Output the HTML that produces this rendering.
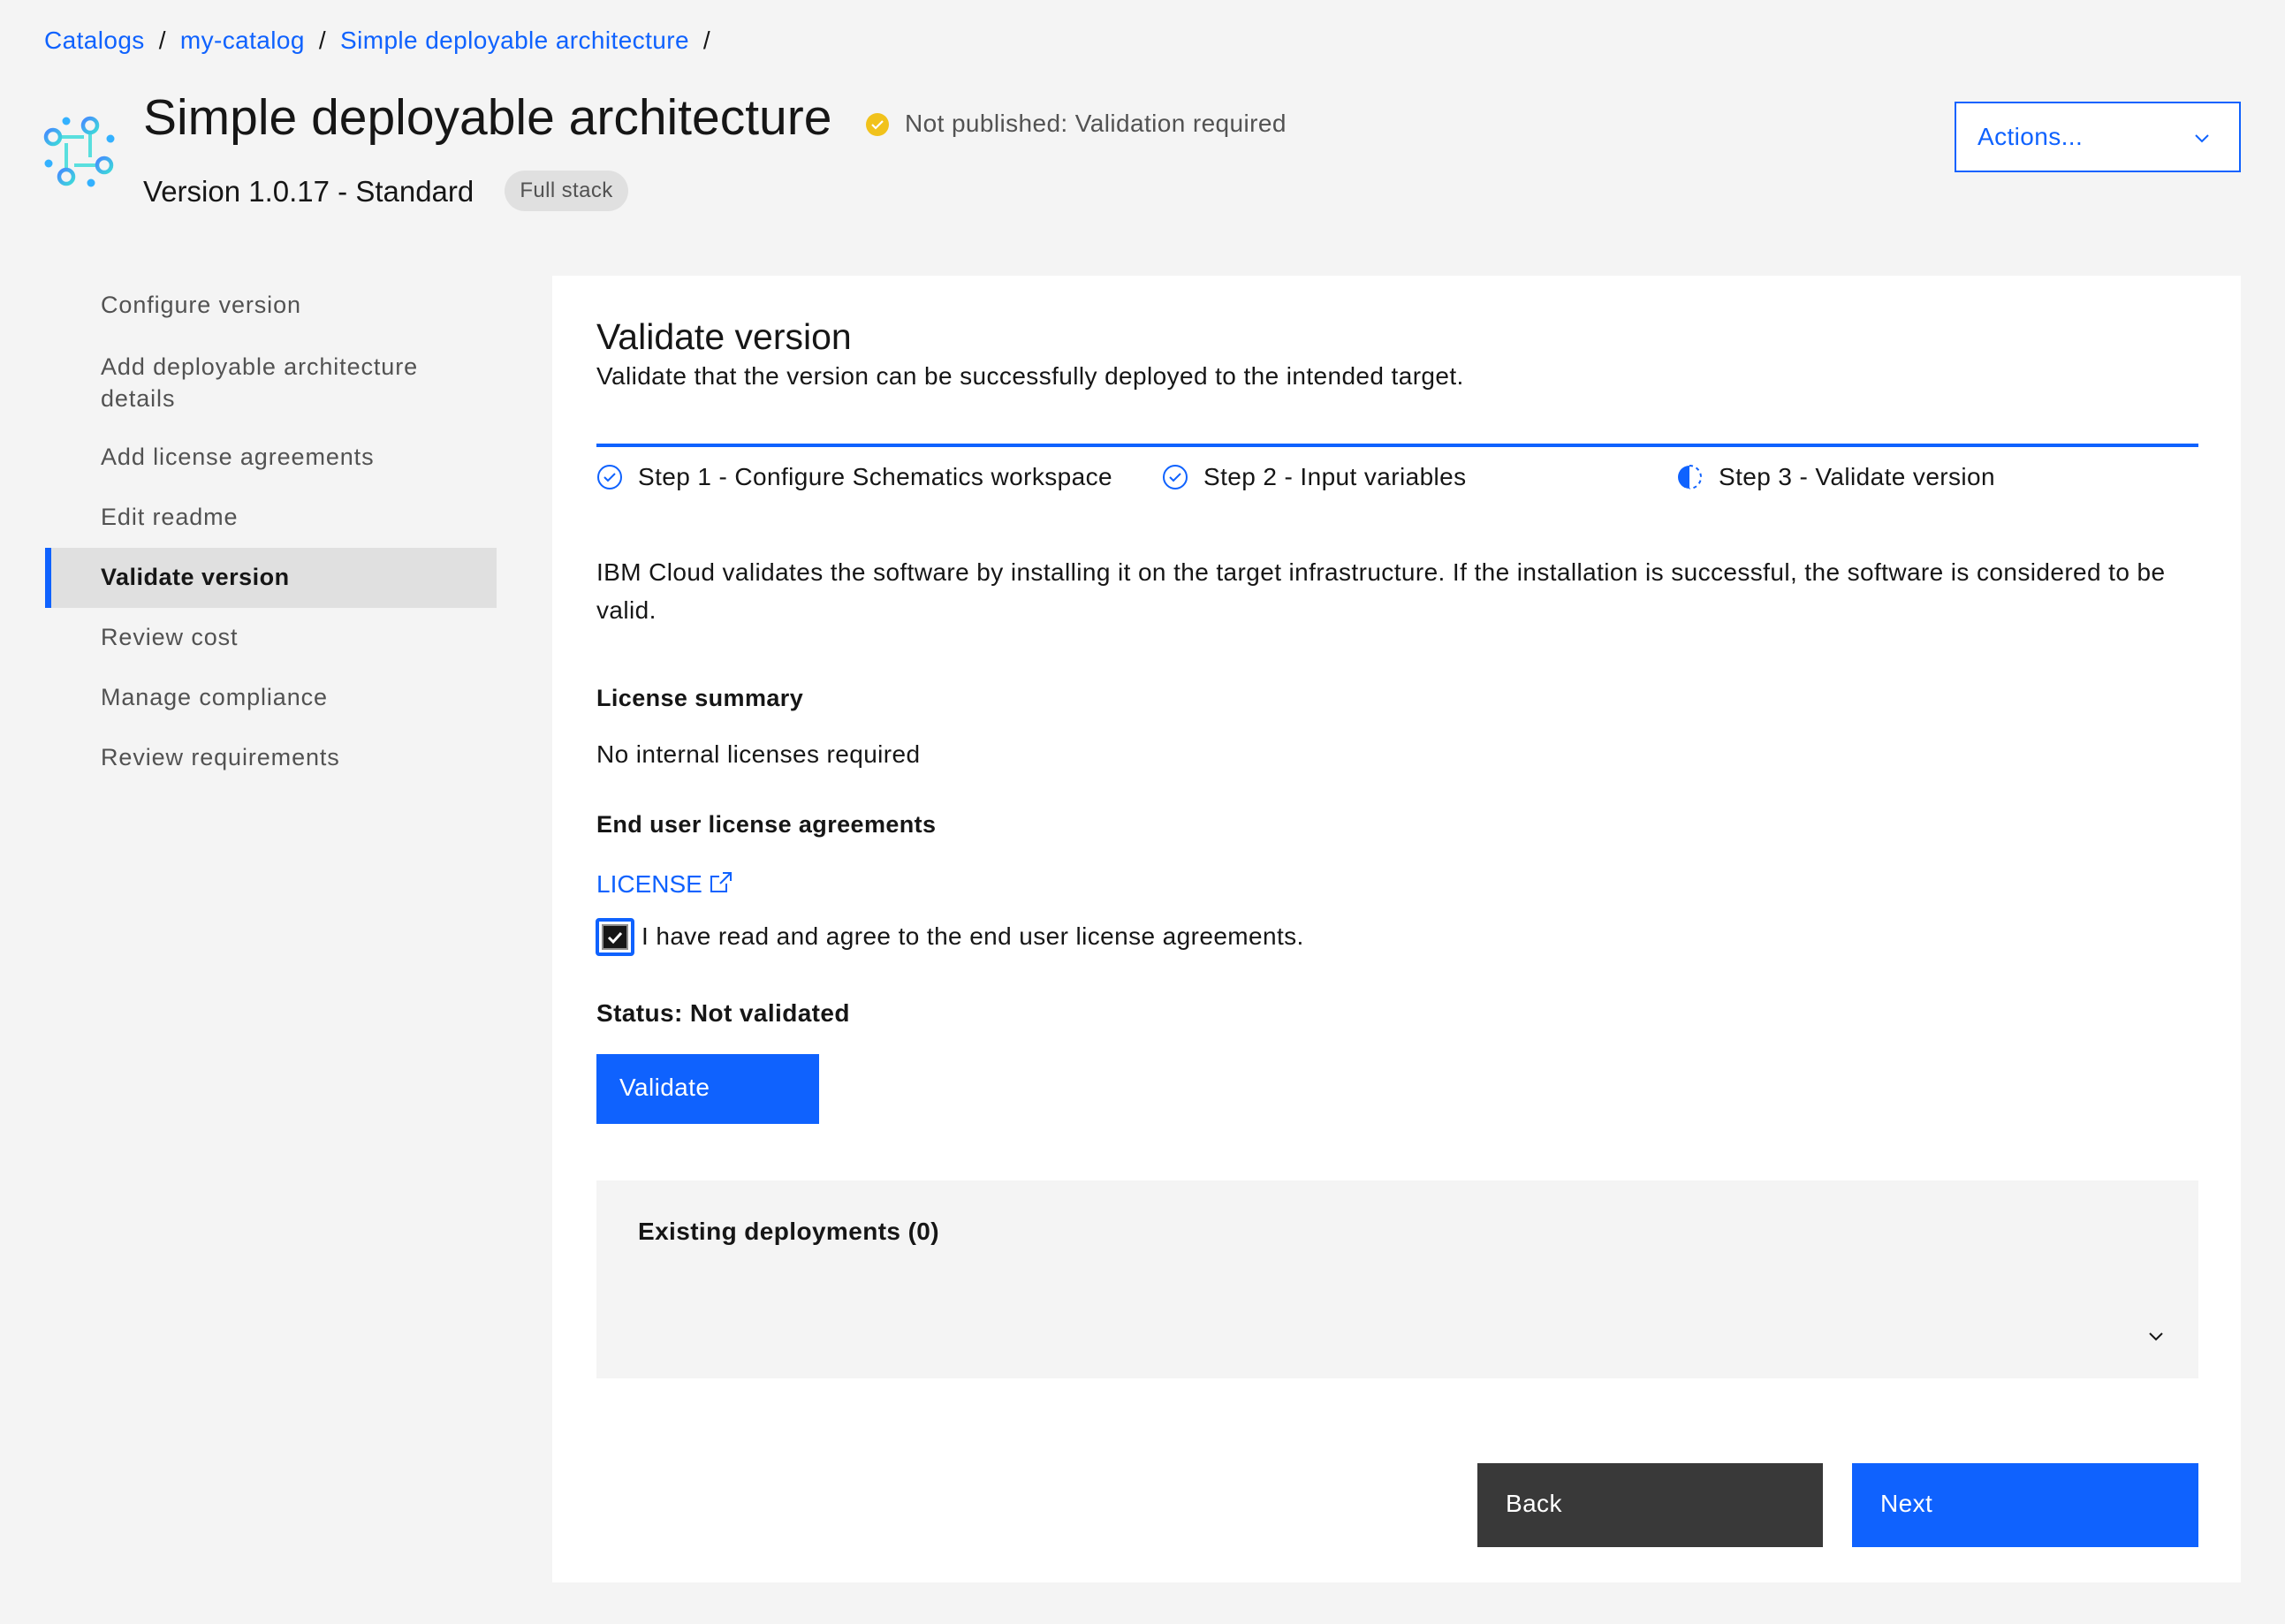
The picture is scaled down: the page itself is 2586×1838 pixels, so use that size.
<!DOCTYPE html>
<html><head><meta charset="utf-8">
<style>
*{box-sizing:border-box;margin:0;padding:0}
body{width:2586px;height:1838px;background:#f4f4f4;font-family:"Liberation Sans",sans-serif;color:#161616;position:relative;overflow:hidden;letter-spacing:0.4px}
.a{position:absolute;white-space:nowrap}
.bc{top:30px;left:50px;font-size:28px;color:#0f62fe}
.bc span{color:#161616;margin:0 16px}
.nav{left:114px;font-size:27px;color:#525252;letter-spacing:0.9px}
.card{position:absolute;left:625px;top:312px;width:1911px;height:1479px;background:#fff}
.b{font-weight:bold}
</style></head><body>
<div class="a bc">Catalogs<span>/</span>my-catalog<span>/</span>Simple deployable architecture<span>/</span></div>
<svg class="a" style="left:40px;top:120px" width="100" height="100" viewBox="40 120 100 100">
<defs><linearGradient id="g" x1="0" y1="0" x2="1" y2="1"><stop offset="0" stop-color="#4589ff"/><stop offset="1" stop-color="#3ddbd9"/></linearGradient></defs>
<g stroke="#3ddbd9" stroke-width="4" fill="none" opacity=".85">
<path d="M69 155H95M102 151V178M109 187H84M75 191V162"/></g>
<g stroke="url(#g)" stroke-width="4.5" fill="none">
<circle cx="60" cy="155" r="8"/><circle cx="102" cy="142" r="8"/><circle cx="118" cy="187" r="8"/><circle cx="75" cy="200" r="8"/></g>
<g fill="#33b1ff"><circle cx="75" cy="137" r="4.5"/><circle cx="125" cy="157" r="4.5"/><circle cx="55" cy="185" r="4.5"/><circle cx="103" cy="207" r="4.5"/></g>
</svg>
<div class="a" style="left:162px;top:100px;font-size:57px;letter-spacing:0">Simple deployable architecture</div>
<svg class="a" style="left:979px;top:127px" width="28" height="28" viewBox="0 0 28 28"><circle cx="14" cy="14" r="13" fill="#f1c21b"/><path d="M8 14l4 4 8-8" stroke="#fff" stroke-width="2.2" fill="none"/></svg>
<div class="a" style="left:1024px;top:124px;font-size:28px;color:#525252">Not published: Validation required</div>
<div class="a" style="left:162px;top:198px;font-size:33px;letter-spacing:0">Version 1.0.17 - Standard</div>
<div class="a" style="left:571px;top:193px;width:140px;height:46px;border-radius:23px;background:#e0e0e0;font-size:24px;color:#525252;text-align:center;line-height:46px">Full stack</div>
<div class="a" style="left:2212px;top:115px;width:324px;height:80px;border:2px solid #0f62fe;background:#fff"></div>
<div class="a" style="left:2238px;top:139px;font-size:28px;color:#0f62fe">Actions...</div>
<svg class="a" style="left:2482px;top:146px" width="20" height="20" viewBox="0 0 20 20"><path d="M3 7l7 7 7-7" stroke="#0f62fe" stroke-width="2" fill="none"/></svg>

<div class="a" style="left:51px;top:620px;width:511px;height:68px;background:#e0e0e0;border-left:7px solid #0f62fe"></div>
<div class="a nav" style="top:330px">Configure version</div>
<div class="a nav" style="top:397px;line-height:36px">Add deployable architecture<br>details</div>
<div class="a nav" style="top:502px">Add license agreements</div>
<div class="a nav" style="top:570px">Edit readme</div>
<div class="a nav b" style="top:638px;color:#161616;letter-spacing:0.5px">Validate version</div>
<div class="a nav" style="top:706px">Review cost</div>
<div class="a nav" style="top:774px">Manage compliance</div>
<div class="a nav" style="top:842px">Review requirements</div>

<div class="card"></div>
<div class="a" style="left:675px;top:358px;font-size:41px;letter-spacing:0">Validate version</div>
<div class="a" style="left:675px;top:410px;font-size:28px">Validate that the version can be successfully deployed to the intended target.</div>
<div class="a" style="left:675px;top:502px;width:1813px;height:4px;background:#0f62fe"></div>
<svg class="a" style="left:675px;top:525px" width="30" height="30" viewBox="0 0 30 30"><circle cx="15" cy="15" r="13" stroke="#0f62fe" stroke-width="2" fill="none"/><path d="M9 15l4 4 8-8" stroke="#0f62fe" stroke-width="2" fill="none"/></svg>
<div class="a" style="left:722px;top:524px;font-size:28px">Step 1 - Configure Schematics workspace</div>
<svg class="a" style="left:1315px;top:525px" width="30" height="30" viewBox="0 0 30 30"><circle cx="15" cy="15" r="13" stroke="#0f62fe" stroke-width="2" fill="none"/><path d="M9 15l4 4 8-8" stroke="#0f62fe" stroke-width="2" fill="none"/></svg>
<div class="a" style="left:1362px;top:524px;font-size:28px">Step 2 - Input variables</div>
<svg class="a" style="left:1897px;top:525px" width="30" height="30" viewBox="0 0 30 30"><path d="M15 2A13 13 0 0 0 15 28Z" fill="#0f62fe"/><path d="M15 2A13 13 0 0 1 15 28" stroke="#0f62fe" stroke-width="2" stroke-dasharray="4 4" fill="none"/></svg>
<div class="a" style="left:1945px;top:524px;font-size:28px">Step 3 - Validate version</div>
<div class="a" style="left:675px;top:626px;font-size:28px;line-height:43px;white-space:normal;width:1800px">IBM Cloud validates the software by installing it on the target infrastructure. If the installation is successful, the software is considered to be valid.</div>
<div class="a b" style="left:675px;top:775px;font-size:27px">License summary</div>
<div class="a" style="left:675px;top:838px;font-size:28px">No internal licenses required</div>
<div class="a b" style="left:675px;top:918px;font-size:27px">End user license agreements</div>
<div class="a" style="left:675px;top:985px;font-size:28px;color:#0f62fe;letter-spacing:0">LICENSE</div>
<svg class="a" style="left:802px;top:985px" width="28" height="28" viewBox="0 0 28 28"><path d="M20 15v9H3V7h9M16 3h9v9M25 3L13 15" stroke="#0f62fe" stroke-width="2" fill="none"/></svg>
<div class="a" style="left:674px;top:1039px;width:44px;height:43px;border:4px solid #0f62fe;border-radius:4px;background:#fff;padding:3px"><div style="width:100%;height:100%;background:#161616;border:2px solid #8d8d8d"></div></div>
<svg class="a" style="left:684px;top:1049px" width="24" height="24" viewBox="0 0 24 24"><path d="M5 12l5 5 9-10" stroke="#fff" stroke-width="3" fill="none"/></svg>
<div class="a" style="left:726px;top:1044px;font-size:28px">I have read and agree to the end user license agreements.</div>
<div class="a b" style="left:675px;top:1131px;font-size:28px">Status: Not validated</div>
<div class="a" style="left:675px;top:1193px;width:252px;height:79px;background:#0f62fe;color:#fff;font-size:28px;padding:22px 0 0 26px">Validate</div>
<div class="a" style="left:675px;top:1336px;width:1813px;height:224px;background:#f4f4f4"></div>
<div class="a b" style="left:722px;top:1378px;font-size:28px">Existing deployments (0)</div>
<svg class="a" style="left:2430px;top:1502px" width="20" height="20" viewBox="0 0 20 20"><path d="M3 7l7 7 7-7" stroke="#161616" stroke-width="2" fill="none"/></svg>
<div class="a" style="left:1672px;top:1656px;width:391px;height:95px;background:#393939;color:#fff;font-size:28px;padding:30px 0 0 32px">Back</div>
<div class="a" style="left:2096px;top:1656px;width:392px;height:95px;background:#0f62fe;color:#fff;font-size:28px;padding:30px 0 0 32px">Next</div>
</body></html>
